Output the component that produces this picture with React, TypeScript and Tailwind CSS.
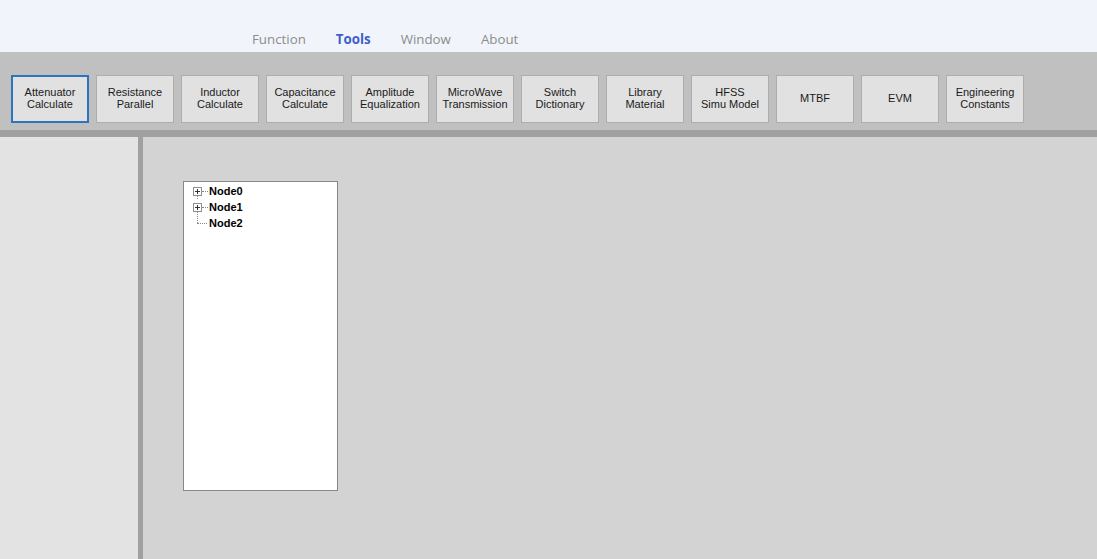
import React, { useState } from 'react';

const menuItems = ['Function', 'Tools', 'Window', 'About'];

const toolButtons = [
    ['Attenuator', 'Calculate'],
    ['Resistance', 'Parallel'],
    ['Inductor', 'Calculate'],
    ['Capacitance', 'Calculate'],
    ['Amplitude', 'Equalization'],
    ['MicroWave', 'Transmission'],
    ['Switch', 'Dictionary'],
    ['Library', 'Material'],
    ['HFSS', 'Simu Model'],
    ['MTBF'],
    ['EVM'],
    ['Engineering', 'Constants'],
];

const nodes = ['Node0', 'Node1', 'Node2'];

const PlusBox: React.FC = () => (
    <svg width="9" height="9" viewBox="0 0 9 9" className="shrink-0">
        <rect x="0.5" y="0.5" width="8" height="8" fill="#fff" stroke="#8f8f8f" />
        <path d="M2 4.5h5M4.5 2v5" stroke="#333" strokeWidth="1" />
    </svg>
);

export default function App() {
    const [activeMenu, setActiveMenu] = useState('Tools');
    const [activeTool, setActiveTool] = useState(0);

    return (
        <div className="h-screen w-full flex flex-col overflow-hidden font-['Liberation_Sans',Arial,sans-serif]">
            {/* menu bar */}
            <div className="h-[52px] shrink-0 bg-[#f1f5fb] flex items-start pl-[252px] pt-[29px] gap-[30px]">
                {menuItems.map(item => (
                    <button
                        key={item}
                        onClick={() => setActiveMenu(item)}
                        className={
                            item === activeMenu
                                ? "text-[13.3px] leading-[20px] font-['Open_Sans',sans-serif] font-bold text-[#3f5fcb]"
                                : "text-[13.3px] leading-[20px] font-['Open_Sans',sans-serif] text-[#8c8c8c]"
                        }
                    >
                        {item}
                    </button>
                ))}
            </div>

            {/* tool buttons */}
            <div className="h-[78px] shrink-0 bg-[#c0c0c0] flex items-start pl-[11px] pt-[23px] gap-[7px]">
                {toolButtons.map((lines, i) => (
                    <button
                        key={lines.join(' ')}
                        onClick={() => setActiveTool(i)}
                        className={
                            i === activeTool
                                ? 'w-[78px] h-[48px] pb-[2px] bg-[#e1e1e1] border-2 border-[#2b74be] flex flex-col items-center justify-center text-[11px] leading-[12px] text-[#1a1a1a]'
                                : 'w-[78px] h-[48px] pb-[2px] bg-[#e1e1e1] border border-[#adadad] flex flex-col items-center justify-center text-[11px] leading-[12px] text-[#1a1a1a]'
                        }
                    >
                        {lines.map(l => (
                            <span key={l}>{l}</span>
                        ))}
                    </button>
                ))}
            </div>
            <div className="h-[7px] shrink-0 bg-[#a0a0a0]" />

            {/* body */}
            <div className="flex-1 flex min-h-0">
                <div className="w-[138px] bg-[#e3e3e3]" />
                <div className="w-[5px] bg-[#a0a0a0]" />
                <div className="flex-1 bg-[#d3d3d3] pl-[40px] pt-[44px]">
                    <div className="w-[155px] h-[310px] bg-white border border-[#878787] pt-[1px] pl-[9px]">
                        {nodes.map((node, i) => (
                            <div key={node} className="relative h-[16px] flex items-center">
                                {i < 2 ? (
                                    <PlusBox />
                                ) : (
                                    <div className="w-[9px] h-[9px] shrink-0" />
                                )}
                                <div className={i < 2 ? 'w-[6px] border-t border-dotted border-[#888]' : 'w-[10px] -ml-[5px] mr-[1px] border-t border-dotted border-[#888]'} />
                                {i < 2 && (
                                    <div className={i === 0 ? 'absolute left-[4px] top-[12px] h-[4px] border-l border-dotted border-[#888]' : 'absolute left-[4px] top-[12px] h-[12px] border-l border-dotted border-[#888]'} />
                                )}
                                <span className="ml-[1px] text-[11px] font-bold text-black leading-[16px]">{node}</span>
                            </div>
                        ))}
                    </div>
                </div>
            </div>
        </div>
    );
}
